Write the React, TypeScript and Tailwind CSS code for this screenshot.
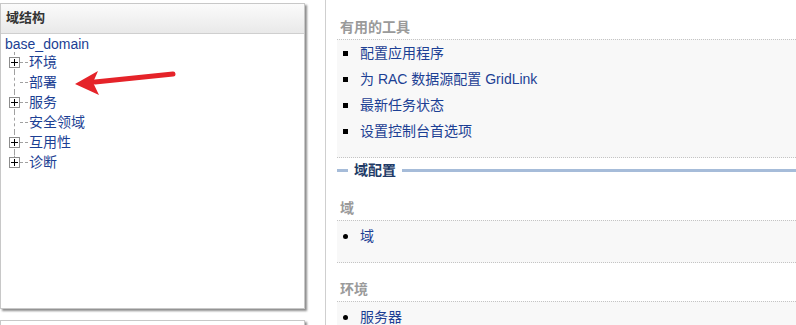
const font = "font-['Liberation_Sans','Noto_Sans_CJK_SC',sans-serif]";

function PlusBox() {
  return (
    <span className="relative z-10 flex h-[11px] w-[11px] items-center justify-center border border-[#8c8c8c] bg-white">
      <svg width="7" height="7" viewBox="0 0 7 7">
        <path d="M0 3.5h7M3.5 0v7" stroke="#000" strokeWidth="1" />
      </svg>
    </span>
  );
}

function TreeRow({ label, expandable, last }: { label: string; expandable?: boolean; last?: boolean }) {
  return (
    <div className="relative flex h-5 items-center">
      <span
        className={[
          "absolute left-[13px] top-0 border-l border-dashed border-[#a0a0a0]",
          last ? "h-[10px]" : "h-5",
        ].join(" ")}
      />
      <span className="flex w-[28px] items-center pl-[8px]">
        {expandable ? <PlusBox /> : <span className="w-[11px]" />}
        <span className="w-[8px] border-t border-dashed border-[#a0a0a0]" />
      </span>
      <span className="text-[14px] text-[#1c3f94]">{label}</span>
    </div>
  );
}

function ListBlock({ title, items, square, bodyH }: { title: string; items: string[]; square?: boolean; bodyH: string }) {
  return (
    <div>
      <div className="h-[24px] pl-[3px] pt-[2px] text-[14px] font-bold leading-[20px] text-[#9a9a9a]">{title}</div>
      <div className={["border-y border-dotted border-[#c4c4c4] bg-[#f8f8f8]", square ? "" : "pt-[2px]", bodyH].join(" ")}>
        {items.map((it) => (
          <div key={it} className="flex h-[26px] items-center">
            <span
              className={[
                "ml-[6px] mr-[12px] bg-black",
                square ? "h-[5px] w-[5px]" : "h-[5px] w-[5px] rounded-full",
              ].join(" ")}
            />
            <span className="text-[14px] text-[#1c3f94]">{it}</span>
          </div>
        ))}
      </div>
    </div>
  );
}

export default function App() {
  return (
    <div className={["flex h-[325px] w-[796px] overflow-hidden bg-white", font].join(" ")}>
      <div className="flex w-[325px] shrink-0 flex-col pt-[3px]">
        <div className="relative h-[306px] w-[305px] shrink-0 border border-[#c8c8c8] bg-white shadow-[2px_2px_2px_rgba(0,0,0,0.45)]">
          <div className="h-[30px] border-b border-[#cfcfcf] bg-gradient-to-b from-[#fbfbfb] to-[#e9e9e9] pl-[5px] pt-[4px] text-[13px] font-bold text-[#333]">
            域结构
          </div>
          <div className="pl-[4px] pt-[1px]">
            <div className="h-[17px] text-[14px] leading-[19px] text-[#1c3f94]">base_domain</div>
            <div className="-ml-[4px]">
              <TreeRow label="环境" expandable />
              <TreeRow label="部署" />
              <TreeRow label="服务" expandable />
              <TreeRow label="安全领域" />
              <TreeRow label="互用性" expandable />
              <TreeRow label="诊断" expandable last />
            </div>
          </div>
          <svg className="absolute left-[70px] top-[62px]" width="110" height="32" viewBox="0 0 110 32">
            <path d="M102 8 L24 16" stroke="#e52329" strokeWidth="5" strokeLinecap="round" />
            <path d="M4 18 L27 5 L22 16.5 L28 29 Z" fill="#e52329" />
          </svg>
        </div>
        <div className="mt-[11px] h-[20px] w-[305px] shrink-0 border border-[#c8c8c8] shadow-[2px_2px_2px_rgba(0,0,0,0.45)]" />
      </div>
      <div className="flex flex-1 border-l border-[#cfcfcf] pl-[11px]">
        <div className="flex-1 pt-[15px]">
          <ListBlock
            title="有用的工具"
            square
            bodyH="h-[119px]"
            items={["配置应用程序", "为 RAC 数据源配置 GridLink", "最新任务状态", "设置控制台首选项"]}
          />
          <div className="mt-[1px] flex h-[22px] items-center">
            <span className="h-[3px] w-[11px] bg-[#a6bcd9]" />
            <span className="px-[6px] text-[14px] font-bold text-[#213a66]">域配置</span>
            <span className="h-[3px] flex-1 bg-[#a6bcd9]" />
          </div>
          <div className="mt-[15px]">
            <ListBlock title="域" items={["域"]} bodyH="h-[43px]" />
          </div>
          <div className="mt-[14px]">
            <ListBlock title="环境" items={["服务器"]} bodyH="h-[43px]" />
          </div>
        </div>
      </div>
    </div>
  );
}
